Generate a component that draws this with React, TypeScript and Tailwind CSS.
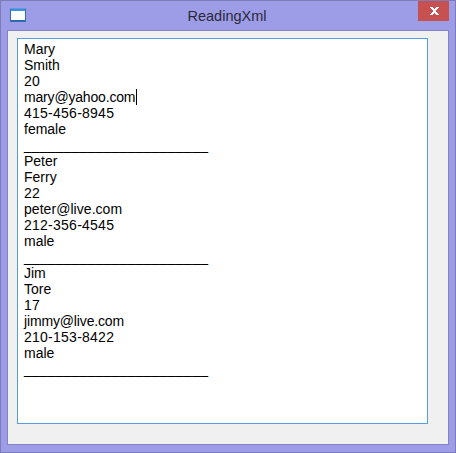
const people = [
  [
    { text: "Mary" },
    { text: "Smith" },
    { text: "20", cls: "tracking-[0.25px]" },
    { text: "mary@yahoo.com", cls: "tracking-[-0.18px]" },
    { text: "415-456-8945", cls: "tracking-[0.25px]" },
    { text: "female" },
  ],
  [
    { text: "Peter" },
    { text: "Ferry" },
    { text: "22", cls: "tracking-[0.25px]" },
    { text: "peter@live.com", cls: "tracking-[0.05px]" },
    { text: "212-356-4545", cls: "tracking-[0.25px]" },
    { text: "male" },
  ],
  [
    { text: "Jim" },
    { text: "Tore" },
    { text: "17", cls: "tracking-[0.25px]" },
    { text: "jimmy@live.com", cls: "tracking-[-0.15px]" },
    { text: "210-153-8422", cls: "tracking-[0.25px]" },
    { text: "male" },
  ],
];

function WindowIcon() {
  return (
    <svg width="16" height="14" viewBox="0 0 16 14" className="block" shapeRendering="crispEdges">
      <rect x="0" y="0" width="16" height="14" fill="#2f6db8" />
      <rect x="0" y="0" width="16" height="1" fill="#5a9ae0" />
      <rect x="1" y="1" width="14" height="2" fill="#3f8ee0" />
      <rect x="1" y="3" width="14" height="9" fill="#ffffff" />
      <rect x="1" y="12" width="14" height="1" fill="#2f62a8" />
    </svg>
  );
}

function CloseIcon() {
  return (
    <svg width="9" height="8" viewBox="0 0 9 8" className="block" shapeRendering="crispEdges">
      <path d="M0 0h3v1h1v1h1V1h1V0h3v1H8v1H7v1H6v2h1v1h1v1h1v1H6V7H5V6H4v1H3v1H0V7h1V6h1V5h1V3H2V2H1V1H0z" fill="#ffffff" />
    </svg>
  );
}

export default function App() {
  return (
    <div className="w-[456px] h-[453px] flex flex-col bg-[#9d9ce6] border border-[#7c7cb8] font-['Liberation_Sans',Arial,sans-serif]">
      <div className="h-[29px] flex items-start shrink-0">
        <div className="ml-[9px] mt-[7px] w-[16px]">
          <WindowIcon />
        </div>
        <div className="flex-1 text-center text-[14.5px] leading-[20px] mt-[5px] pl-[10px] text-[#2a2a3a]">
          ReadingXml
        </div>
        <div className="mr-[6px] w-[31px] h-[20px] bg-[#c75050] flex items-center justify-center pl-[1px]">
          <CloseIcon />
        </div>
      </div>
      <div className="flex-1 mx-[6px] mb-[7px] border border-[#8482c4] bg-[#f0f0f0] pt-[7px] pl-[9px] pr-[20px] pb-[20px] flex">
        <div className="flex-1 bg-white border border-[#569de5] pl-[6px] pt-[2px] text-black text-[14px] leading-[16px]">
          {people.map((person, i) => (
            <div key={i}>
              {person.map((line, j) => (
                <div key={j} className={`relative ${line.cls ?? ""}`}>
                  {line.text}
                  {i === 0 && j === 3 && (
                    <span className="absolute left-[112px] top-0 w-px h-[16px] bg-black" />
                  )}
                </div>
              ))}
              <div className="tracking-[0.22px] whitespace-pre">_______________________</div>
            </div>
          ))}
        </div>
      </div>
    </div>
  );
}
